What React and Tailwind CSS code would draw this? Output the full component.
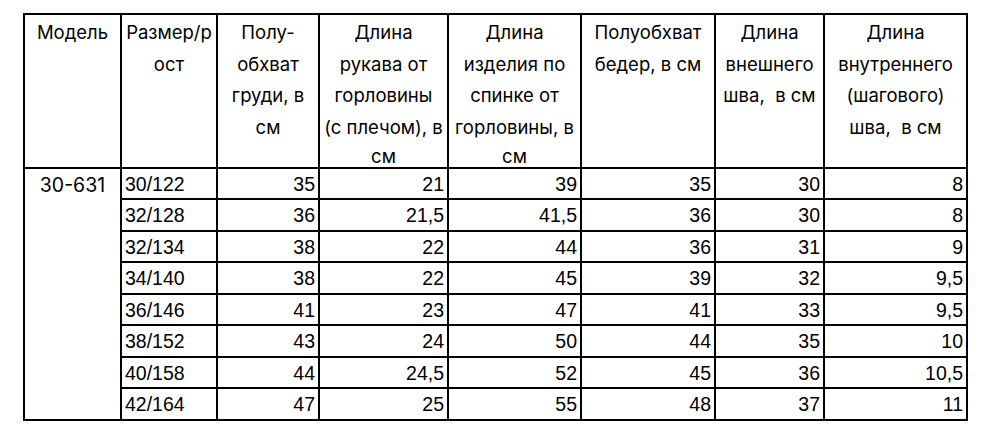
import React from "react";

const widths = [97, 96, 102, 129, 133, 134, 109, 143];

const headers = [
  ["Модель"],
  ["Размер/р", "ост"],
  ["Полу-", "обхват", "груди, в", "см"],
  ["Длина", "рукава от", "горловины", "(с плечом), в", "см"],
  ["Длина", "изделия по", "спинке от", "горловины, в", "см"],
  ["Полуобхват", "бедер, в см"],
  ["Длина", "внешнего", "шва,\u00a0 в см"],
  ["Длина", "внутреннего", "(шагового)", "шва,\u00a0 в см"],
];

const rows = [
  ["30/122", "35", "21", "39", "35", "30", "8"],
  ["32/128", "36", "21,5", "41,5", "36", "30", "8"],
  ["32/134", "38", "22", "44", "36", "31", "9"],
  ["34/140", "38", "22", "45", "39", "32", "9,5"],
  ["36/146", "41", "23", "47", "41", "33", "9,5"],
  ["38/152", "43", "24", "50", "44", "35", "10"],
  ["40/158", "44", "24,5", "52", "45", "36", "10,5"],
  ["42/164", "47", "25", "55", "48", "37", "11"],
];

export default function App() {
  return (
    <div className="w-[1000px] h-[439px] bg-white pt-[13px] pl-[23px]">
      <table className="border-collapse table-fixed text-black">
        <colgroup>
          {widths.map((w, i) => (
            <col key={i} style={{ width: w }} />
          ))}
        </colgroup>
        <thead>
          <tr>
            {headers.map((lines, i) => (
              <th
                key={i}
                className="border-2 border-black align-top p-0 text-center font-normal font-['Inter',sans-serif] text-[18.5px] leading-[31.5px] whitespace-nowrap"
              >
                <div className="h-[152px] pt-[2px]">
                  {lines.map((l, j) => (
                    <div key={j} className={j === 4 ? "leading-[26px]" : ""}>
                      {l}
                    </div>
                  ))}
                </div>
              </th>
            ))}
          </tr>
        </thead>
        <tbody className="font-['Liberation_Sans',Arial,sans-serif] text-[19.5px] leading-[21px]">
          {rows.map((r, i) => (
            <tr key={i}>
              {i === 0 && (
                <td
                  rowSpan={8}
                  className="border-2 border-black align-top text-center p-0 pt-[6px] font-['Inter',sans-serif] text-[19.5px]"
                >
                  30-631
                </td>
              )}
              {r.map((c, j) => (
                <td
                  key={j}
                  className={
                    "border-2 border-black align-top p-0 " +
                    (j === 0 ? "text-left pl-[3px]" : "text-right pr-[3px]")
                  }
                >
                  <div className={(i % 2 === 0 ? "h-[29px]" : "h-[30px]") + " pt-[5px]"}>{c}</div>
                </td>
              ))}
            </tr>
          ))}
        </tbody>
      </table>
    </div>
  );
}
